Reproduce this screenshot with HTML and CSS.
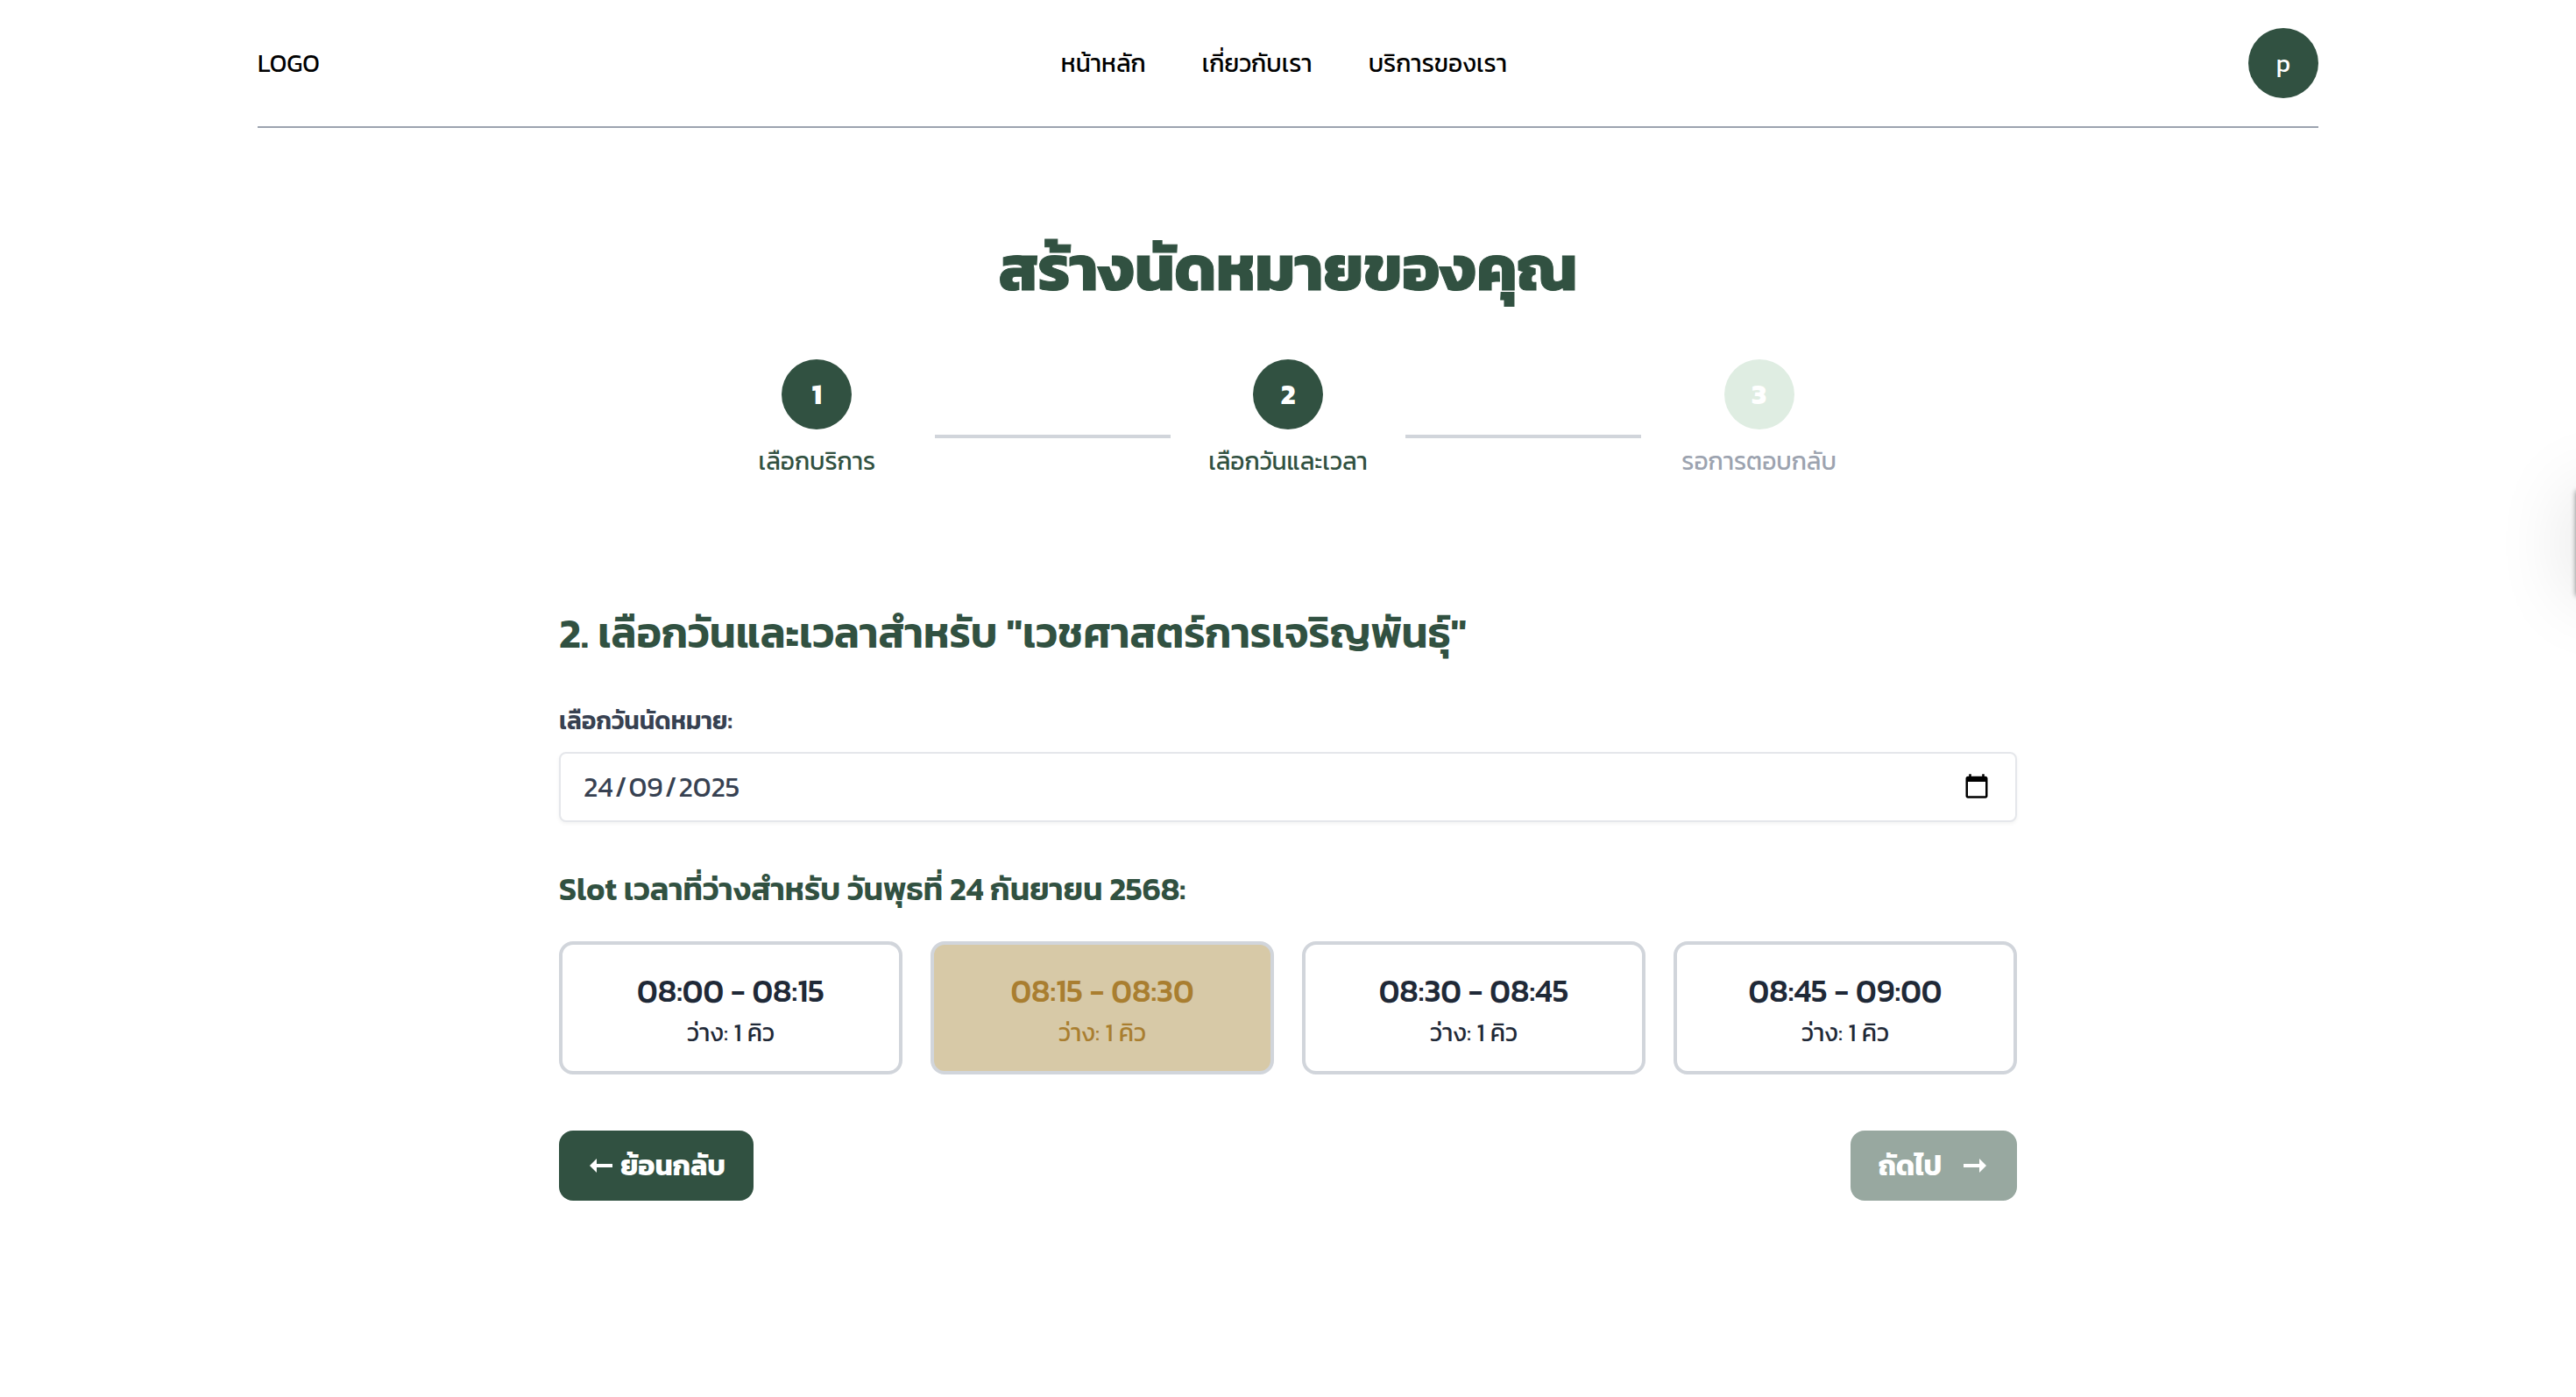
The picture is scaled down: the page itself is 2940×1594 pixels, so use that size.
FILE: index.html
```html
<!DOCTYPE html>
<html lang="th">
<head>
<meta charset="utf-8">
<meta name="viewport" content="width=device-width, initial-scale=1">
<title>สร้างนัดหมายของคุณ</title>
<link rel="stylesheet" href="styles.css">
</head>
<body>
<header class="header">
  <a class="logo" href="#">LOGO</a>
  <nav class="nav">
    <a href="#">หน้าหลัก</a>
    <a href="#">เกี่ยวกับเรา</a>
    <a href="#">บริการของเรา</a>
  </nav>
  <button class="avatar" type="button">p</button>
</header>

<main class="main">
  <h1 class="title">สร้างนัดหมายของคุณ</h1>

  <ol class="steps">
    <li class="step"><span class="step-number">1</span><span class="step-label">เลือกบริการ</span></li>
    <li class="step-line" role="presentation"></li>
    <li class="step"><span class="step-number">2</span><span class="step-label">เลือกวันและเวลา</span></li>
    <li class="step-line" role="presentation"></li>
    <li class="step step-pending"><span class="step-number">3</span><span class="step-label">รอการตอบกลับ</span></li>
  </ol>

  <form class="form">
    <h2 class="form-title">2. เลือกวันและเวลาสำหรับ "เวชศาสตร์การเจริญพันธุ์"</h2>

    <label class="label" for="date">เลือกวันนัดหมาย:</label>
    <input class="date-input" id="date" type="date" value="2025-09-24">

    <h3 class="slots-title">Slot เวลาที่ว่างสำหรับ วันพุธที่ 24 กันยายน 2568:</h3>
    <div class="slots">
      <button class="slot" type="button"><span class="slot-time">08:00 - 08:15</span><span class="slot-queue">ว่าง: 1 คิว</span></button>
      <button class="slot slot-selected" type="button"><span class="slot-time">08:15 - 08:30</span><span class="slot-queue">ว่าง: 1 คิว</span></button>
      <button class="slot" type="button"><span class="slot-time">08:30 - 08:45</span><span class="slot-queue">ว่าง: 1 คิว</span></button>
      <button class="slot" type="button"><span class="slot-time">08:45 - 09:00</span><span class="slot-queue">ว่าง: 1 คิว</span></button>
    </div>

    <div class="actions">
      <button class="action" type="button">
        <svg class="arrow" viewBox="0 0 30 30" aria-hidden="true"><path d="M3 15 11 7v6h18v4H11v6z"/></svg>
        <span>ย้อนกลับ</span>
      </button>
      <button class="action action-next" type="submit" disabled>
        <span>ถัดไป</span>
        <svg class="arrow" viewBox="0 0 30 30" aria-hidden="true"><path d="M27 15 19 7v6H1v4h18v6z"/></svg>
      </button>
    </div>
  </form>
</main>

<aside class="drawer" aria-hidden="true"></aside>
</body>
</html>
```
FILE: styles.css
```css
* {
  box-sizing: border-box;
}

body {
  margin: 0;
  background: #fff;
  color: #000;
  font-family: Kanit, Prompt, "Noto Sans Thai", Roboto, sans-serif;
  font-size: 28px;
  line-height: 40px;
}

button,
input {
  font: inherit;
}

a {
  color: inherit;
  text-decoration: none;
}

.header {
  display: flex;
  align-items: center;
  justify-content: space-between;
  width: 80%;
  margin: 0 auto;
  padding: 32px 0;
  border-bottom: 2px solid #9ca3af;
}

.nav {
  display: flex;
  gap: 64px;
}

.avatar {
  width: 80px;
  height: 80px;
  padding: 0;
  border: 0;
  border-radius: 50%;
  background: #315141;
  color: #fff;
}

.main {
  max-width: 1792px;
  margin: 0 auto;
  padding: 120px 64px;
}

.title {
  margin: 0 0 64px;
  color: #315141;
  font-size: 72px;
  font-weight: 700;
  line-height: 80px;
  text-align: center;
  -webkit-text-stroke: 1px #315141;
}

.steps {
  display: grid;
  grid-template-columns: repeat(5, 1fr);
  align-items: center;
  max-width: 1344px;
  margin: 0 auto;
  padding: 0;
  list-style: none;
}

.step {
  display: flex;
  flex-direction: column;
  align-items: center;
  gap: 16px;
  color: #315141;
  white-space: nowrap;
}

.step-number {
  display: flex;
  align-items: center;
  justify-content: center;
  width: 80px;
  height: 80px;
  border-radius: 50%;
  background: #315141;
  color: #fff;
  font-size: 32px;
  font-weight: 700;
}

.step-pending {
  color: #9ca3af;
}

.step-pending .step-number {
  background: #dfede2;
}

.step-line {
  height: 4px;
  margin-top: 40px;
  background: #d1d5db;
}

.form {
  margin-top: 144px;
}

.form-title {
  margin: 0 0 48px;
  color: #315141;
  font-size: 48px;
  font-weight: 600;
  line-height: 64px;
}

.label {
  display: block;
  margin-bottom: 16px;
  color: #374151;
  font-weight: 600;
}

.date-input {
  display: block;
  width: 100%;
  height: 80px;
  padding: 0 26px 0 24px;
  border: 2px solid #e5e7eb;
  border-radius: 8px;
  background: #fff;
  box-shadow: 0 2px 4px rgba(0, 0, 0, 0.05);
  color: #374151;
  font-size: 32px;
}

/* Day / month / year order in every locale; the slashes fill columns 2 and 4. */
.date-input::-webkit-datetime-edit-fields-wrapper {
  display: grid;
  grid-template-columns: repeat(5, auto);
  justify-content: start;
}

.date-input::-webkit-datetime-edit-day-field {
  grid-area: 1 / 1;
  padding: 0 2px;
}

.date-input::-webkit-datetime-edit-month-field {
  grid-area: 1 / 3;
  padding: 0 2px;
}

.date-input::-webkit-datetime-edit-year-field {
  grid-area: 1 / 5;
  padding: 0 2px;
}

.slots-title {
  margin: 48px 0 32px;
  color: #315141;
  font-size: 36px;
  font-weight: 600;
  line-height: 56px;
}

.slots {
  display: grid;
  grid-template-columns: repeat(4, 1fr);
  gap: 32px;
}

.slot {
  display: flex;
  flex-direction: column;
  align-items: center;
  padding: 24px;
  border: 4px solid #d1d5db;
  border-radius: 16px;
  background: #fff;
  color: #1f2937;
}

.slot-selected {
  background: #d7c9a7;
  color: #a97e30;
}

.slot-time {
  font-size: 36px;
  font-weight: 500;
  line-height: 56px;
}

.actions {
  display: flex;
  justify-content: space-between;
  margin-top: 64px;
}

.action {
  display: flex;
  align-items: center;
  gap: 8px;
  height: 80px;
  padding: 0 32px;
  border: 0;
  border-radius: 16px;
  background: #315141;
  color: #fff;
  font-size: 32px;
  font-weight: 700;
}

.action-next {
  gap: 24px;
  background: #98a8a0;
}

.arrow {
  width: 30px;
  height: 30px;
  fill: #fff;
}

.drawer {
  position: fixed;
  top: 560px;
  left: 100%;
  width: 56px;
  height: 120px;
  box-shadow: 0 0 6px rgba(0, 0, 0, 0.5), 0 0 90px rgba(0, 0, 0, 0.14);
}
```
